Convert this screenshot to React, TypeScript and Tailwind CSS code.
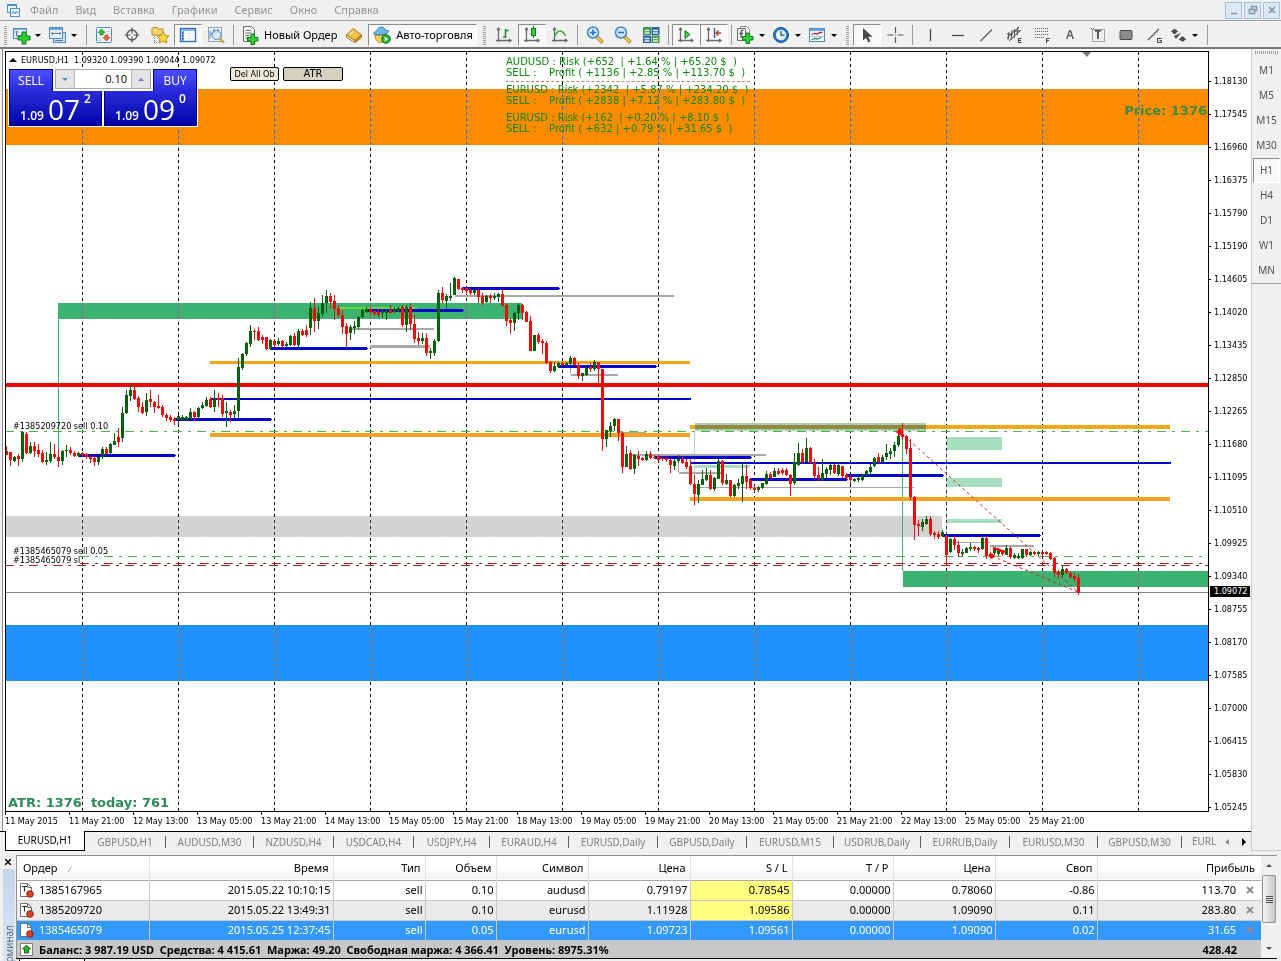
import React from 'react';

/* ------------------------------------------------------------------ */
/* Candles: direction, high, low, body top, body bottom (chart pixels) */
/* ------------------------------------------------------------------ */
const CANDLES = `
r446,455,451,455 r452,466,452,460 g456,462,457,461 r454,466,456,459 g431,462,432,459 r432,454,434,453
g442,454,446,453 r442,457,446,451 r444,457,450,454 r450,463,453,462 g452,465,460,462 g442,463,454,461
r444,459,454,457 r449,467,457,461 g450,465,451,461 g445,457,450,451 r447,455,450,453 r451,457,453,456
g452,457,453,456 r452,457,453,455 r453,459,454,457 r455,463,457,459 r455,466,458,462 g457,465,457,462
g447,459,449,457 r447,454,449,454 g443,454,444,453 g433,445,441,445 r428,447,437,442 g407,442,413,438
g390,414,395,413 g384,401,390,396 r387,400,390,399 r396,412,398,407 r402,414,407,413 g393,416,400,412
r390,407,399,402 r401,413,402,407 r395,409,406,408 r405,417,407,415 r413,421,415,418 r415,422,417,420
r417,425,419,421 g415,424,416,420 g415,421,417,420 g416,421,417,420 g408,420,412,419 r411,421,412,417
g407,418,408,417 g402,409,405,408 g397,407,400,406 r397,408,399,407 g390,412,399,407 r393,407,398,400
r395,417,398,414 g402,427,411,413 r410,422,412,415 g405,418,411,414 g358,418,367,411 g353,370,354,368
g342,356,343,354 g325,347,331,344 r329,340,331,332 r327,341,331,340 r335,344,337,340 r337,350,337,349
g339,350,340,349 r339,348,341,345 g338,346,341,344 r340,348,341,346 g342,347,344,346 g335,346,336,345
r333,346,336,345 g329,347,331,345 r329,336,331,335 r325,337,330,335 g302,335,308,328 r298,332,308,321
g307,329,313,321 g295,317,303,314 g290,313,296,303 r293,309,296,302 r295,320,301,309 r305,317,308,315
r310,334,315,327 r323,348,326,334 g325,340,327,333 g321,334,326,328 g316,329,317,327 g309,318,310,317
g307,313,309,312 r307,315,309,312 r310,316,311,314 r309,317,312,315 g309,318,312,313 g309,320,311,313
r305,314,310,313 g307,313,309,312 g307,312,308,311 r305,327,307,325 g305,332,307,325 r303,330,307,324
r315,343,324,339 r332,345,338,341 g333,344,338,341 r333,356,338,353 g348,359,351,353 g339,356,341,353
g290,342,293,341 r287,303,293,300 g294,309,296,301 g283,301,296,298 g277,295,278,295 r279,290,279,289
r287,293,288,290 r287,294,288,291 r289,295,290,293 g289,295,290,293 r289,303,290,297 r293,305,296,303
g295,303,296,302 r294,303,296,298 g293,300,296,298 g293,302,294,297 r289,306,294,306 r303,326,305,321
r318,334,320,323 g312,331,313,323 g303,320,305,313 r304,320,305,313 r311,322,312,322 r316,351,321,351
g335,351,335,351 r333,344,335,342 r339,354,341,343 r341,364,343,363 r361,373,362,371 g362,372,366,371
g362,368,363,367 r362,366,363,365 g362,366,363,365 g356,365,358,364 r357,366,358,365 r363,379,365,376
g373,381,373,376 g367,376,368,375 r363,372,367,369 g360,371,362,369 r362,383,362,369 r369,451,369,439
g430,447,430,439 g422,437,426,431 g418,431,419,426 r419,441,419,433 r432,473,433,467 g446,467,454,467
r450,470,453,469 g454,474,455,469 r451,466,456,459 r457,461,458,460 g451,461,454,460 r451,459,454,458
r455,459,457,458 r455,461,456,460 r457,461,458,459 r457,462,458,460 r459,473,460,465 g459,470,461,466
g455,463,459,461 r457,464,459,463 r459,469,462,467 r459,485,466,484 r475,505,484,494 g480,503,484,495
g470,485,479,485 g468,481,475,480 r470,490,475,489 g477,491,478,489 g459,479,461,479 r460,485,461,483
g474,485,480,484 r480,497,480,496 g484,497,485,496 g479,489,483,486 g462,502,476,484 r465,489,476,482
r478,490,480,488 r485,492,488,490 g486,492,487,490 g483,489,483,488 g471,485,474,484 r472,478,474,478
g468,477,471,477 r468,475,471,474 r468,475,470,473 r468,476,470,475 r474,496,475,484 g453,485,462,483
g443,466,453,465 r449,463,453,462 g438,462,448,462 r447,463,448,463 r459,479,463,476 r467,481,475,478
g459,481,473,480 g467,478,469,474 g463,475,465,470 r464,474,465,473 g462,476,465,474 r466,478,466,476
r473,480,475,478 r475,484,477,480 g478,482,479,481 g477,482,478,480 g474,481,475,480 g470,476,471,475
g464,474,467,472 g457,467,458,466 r453,463,457,462 g455,463,457,462 g444,460,453,457 g448,459,451,454
g442,457,445,451 g432,447,436,445 r423,440,434,437 r435,454,436,449 r439,500,448,497 r496,540,497,525
r520,536,524,526 g519,531,522,527 g516,525,519,524 r516,536,519,534 r531,539,533,535 r531,539,534,537
g530,537,532,536 r535,563,536,555 g538,553,539,552 r535,550,539,545 r541,557,545,553 g549,557,552,554
g547,553,548,553 g543,551,547,549 r546,551,547,549 r547,553,548,550 g537,550,538,549 r537,559,538,556
r552,558,554,557 g547,555,549,553 g548,556,551,554 r550,556,552,554 g545,555,548,555 r547,559,548,557
g553,559,555,558 g553,559,556,558 g549,559,549,558 r549,557,549,555 g551,556,552,555 r551,555,552,554
g551,556,552,554 r551,557,552,554 r551,555,552,554 r552,560,553,559 r557,577,558,573 r570,579,572,575
g565,577,569,575 r568,574,569,573 r571,579,573,577 r573,582,576,579 r574,595,578,593
`
  .trim()
  .split(/\s+/)
  .map((s, i) => {
    const [high, low, top, bottom] = s.slice(1).split(',').map(Number);
    return { x: 6 + i * 4, color: s[0] === 'r' ? '#ec0c0c' : '#07600c', high, low, top, bottom };
  });

type Box = [x: number, y: number, w: number, h: number, fill: string];

const ZONES: Box[] = [
  [6, 89, 1300, 56, '#ff8c00'],
  [6, 625, 1300, 56, '#1e90ff'],
  [6, 516, 936, 21, '#d3d3d3'],
  [59, 303, 463, 16, '#3cb371'],
  [58, 303, 1, 155, '#3cb371'],
  [903, 571, 400, 16, '#3cb371'],
  [902, 434, 1, 137, '#3cb371'],
  [947, 437, 55, 13, '#a5dfc0'],
  [947, 478, 55, 9, '#a5dfc0'],
  [947, 519, 55, 4, '#a5dfc0'],
  [946, 450, 1, 85, '#a5dfc0'],
  [695, 465, 55, 3, '#a5dfc0'],
  [694, 431, 1, 44, '#a5dfc0'],
];

const LEVELS: Box[] = [
  [455, 295, 219, 2, '#a8a8a8'],
  [350, 328, 84, 2, '#a8a8a8'],
  [370, 345, 60, 3, '#a8a8a8'],
  [570, 366, 1, 8, '#a8a8a8'],
  [571, 374, 47, 2, '#a8a8a8'],
  [618, 432, 28, 1, '#a8a8a8'],
  [632, 454, 134, 2, '#a8a8a8'],
  [678, 460, 1, 12, '#a8a8a8'],
  [679, 472, 43, 2, '#a8a8a8'],
  [694, 487, 220, 1, '#a8a8a8'],
  [944, 542, 46, 1, '#a8a8a8'],
  [990, 545, 44, 2, '#a8a8a8'],
  [990, 547, 1, 14, '#c4c4c4'],
  [210, 361, 480, 3, '#f2a51a'],
  [210, 433, 480, 4, '#f2a51a'],
  [690, 425, 480, 4, '#f2a51a'],
  [690, 497, 480, 4, '#f2a51a'],
  [695, 423, 231, 8, '#a9cfac'],
  [695, 425, 231, 4, '#94873f'],
  [210, 398, 481, 2, '#0505d0'],
  [690, 462, 481, 2, '#0505d0'],
  [338, 307, 79, 2, '#62d83c'],
  [6, 383, 1300, 4, '#f40404'],
];

const PIVOTS = [
  [78, 454], [174, 418], [270, 347], [366, 309], [462, 287],
  [559, 365], [654, 456], [750, 478], [846, 474], [943, 534],
];

const SEPARATORS = Array.from({ length: 12 }, (_, i) => 82 + i * 96);

function Plot() {
  return (
    <svg className="block h-[759px] w-full" aria-label="EURUSD,H1">
      <g transform="translate(-6 -52)" shapeRendering="crispEdges">
        <rect x="5" y="51" width="1600" height="761" fill="#fff" />
        {ZONES.map(([x, y, w, h, f], i) => (
          <rect key={i} x={x} y={y} width={w} height={h} fill={f} />
        ))}
        <g stroke="#fff" strokeDasharray="3 3" style={{ mixBlendMode: 'difference' }}>
          {SEPARATORS.map((x) => (
            <line key={x} x1={x + 0.5} x2={x + 0.5} y1="52" y2="811" />
          ))}
        </g>
        {LEVELS.map(([x, y, w, h, f], i) => (
          <rect key={i} x={x} y={y} width={w} height={h} fill={f} />
        ))}
        {PIVOTS.map(([x, y]) => (
          <g key={x} fill="#0505d0">
            <rect x={x} y={y} width="97" height="3" />
            <rect x={x - 1} y={y + 1} width="99" height="1" />
          </g>
        ))}
        <g fill="none" strokeDasharray="9 6 3 6">
          <path d="M5 431.5H1700M80 556.5H1700" stroke="#4caf4c" />
          <path d="M5 565.5H1700M80 563.5H1700" stroke="#b52222" />
        </g>
        <path d="M5 592.5H1700" stroke="#7a8590" />
        {CANDLES.map((c) => (
          <g key={c.x} fill={c.color}>
            <rect x={c.x} y={c.high} width="1" height={c.low - c.high} />
            <rect x={c.x - 1} y={c.top} width="3" height={Math.max(1, c.bottom - c.top)} />
          </g>
        ))}
        <g shapeRendering="auto" fill="none" stroke="#c42020">
          <path d="M900 432L1078 592M992 556L1078 592" strokeDasharray="3 3" />
          <path d="M993 548l12 4" stroke="#ec0c0c" strokeWidth="2.500" />
          <path d="M896 432l4-4 4 4-4 4zM988 556l4-3 3 3-3 3z" fill="#ec0c0c" stroke="none" />
        </g>
        <path d="M1082 52h9l-4 5z" fill="#708090" shapeRendering="auto" />
      </g>
    </svg>
  );
}

/* ------------------------------ Icons ------------------------------ */
const AXES = (
  <path d="M4.500 3v14M2 15.500h15M3 5l1.500-2L6 5M15 14l2 1.500-2 1.500" fill="none" stroke="#6a6a6a" strokeWidth="1.300" />
);

const ICONS: Record<string, React.ReactNode> = {
  newChart: (
    <>
      <rect x="2.500" y="3.500" width="13" height="10" fill="#e6f1fb" stroke="#4a8cc8" />
      <path d="M3 4.500h12" stroke="#7fb2e0" />
      <path d="M5.500 6v5M4 7.500l1.500-1.500 1.500 1.500M6 11h5" fill="none" stroke="#58708a" />
      <path d="M11 7h4v4h4v4h-4v4h-4v-4H7v-4h4z" fill="#2fd32f" stroke="#0c7a14" />
    </>
  ),
  profiles: (
    <>
      <rect x="6.500" y="7.500" width="12" height="10" fill="#cfe3f7" stroke="#4a8cc8" />
      <rect x="2.500" y="2.500" width="13" height="11" fill="#e6f1fb" stroke="#4a8cc8" />
      <path d="M3 4h12" stroke="#5b9fdc" strokeWidth="2" />
      <path d="M5 8.500h8M5 7v3M13 7v3" stroke="#58708a" />
      <path d="M8 15.500h8" stroke="#58708a" />
    </>
  ),
  market: (
    <>
      <rect x="2.500" y="2.500" width="15" height="15" rx="1" fill="#f4f9fe" stroke="#4a8cc8" />
      <path d="M12 6.500h4M13 8.500h3M4 13.500h3M4 15.500h4" stroke="#b9cfe4" />
      <path d="M7.500 4l3.500 3.500H9v2.500H6V7.500H4z" fill="#2fc32f" stroke="#0c7a14" strokeWidth=".7" />
      <path d="M12.500 16L9 12.500h2V10h3v2.500h2z" fill="#f06a3a" stroke="#b03210" strokeWidth=".7" />
    </>
  ),
  target: (
    <>
      <circle cx="10" cy="10" r="5" fill="none" stroke="#5a5a5a" strokeWidth="1.400" />
      <path d="M10 2.500v6M10 11.500v6M2.500 10h6M11.500 10h6" stroke="#5a5a5a" strokeWidth="1.200" />
    </>
  ),
  folder: (
    <>
      <path d="M2 3.500l1-1h4l1 1.500h5v6H2z" fill="#f7d774" stroke="#c08a1c" />
      <path d="M4.500 11v7M4 17.500h4" stroke="#4a6a8a" strokeDasharray="1 1" />
      <path d="M13 6.500l1.900 3.900 4.100.6-3 2.900.7 4.100-3.700-2-3.700 2 .7-4.100-3-2.900 4.100-.6z" fill="#ffd84a" stroke="#bf8a10" />
    </>
  ),
  navigator: (
    <>
      <rect x="2.500" y="3.500" width="15" height="13" fill="#fff" stroke="#2e6fc4" strokeWidth="1.400" />
      <path d="M3 5h14" stroke="#6aa5e6" strokeWidth="1.500" />
      <rect x="3.500" y="6" width="2.500" height="10" fill="#7fb0e6" />
      <path d="M4.800 7v1.500M4.800 10v1.500M4.800 13v1.500" stroke="#0d2f6b" />
      <path d="M8 8.500h7.500M8 11h7.500M8 13.500h7.500" stroke="#dde6f2" />
    </>
  ),
  tester: (
    <>
      <rect x="2.500" y="2.500" width="13" height="14" fill="#eef4fa" stroke="#8aa9c8" />
      <path d="M4 14V6l2 4 2-6 2 5 2-5 1 4" fill="none" stroke="#6f8faf" />
      <circle cx="10.500" cy="10" r="4.500" fill="#cfe6fa" fillOpacity=".8" stroke="#5b86b0" />
      <path d="M13.800 13.300l4.200 4.700" stroke="#d9a52a" strokeWidth="2.500" />
    </>
  ),
  order: (
    <>
      <path d="M3.500 1.500h8l3 3v12h-11z" fill="#f7f7f7" stroke="#6a6a6a" />
      <path d="M5.500 5.500h5M5.500 8h6M5.500 10.500h4M5.500 13h3" stroke="#6a6a6a" />
      <path d="M11 9h3.500v3.500H18V16h-3.500v3.500H11V16H7.500v-3.500H11z" fill="#2fd32f" stroke="#0c7a14" />
    </>
  ),
  book: (
    <>
      <path d="M2.500 10L9 3.500l8.500 6.500-6.500 5.500z" fill="#f3c14a" stroke="#a8761a" />
      <path d="M2.500 10v2.500l8.500 5v-2z" fill="#fff3cf" stroke="#a8761a" />
      <path d="M11 15.500l6.500-5.500v2.500L11 17.500z" fill="#cf9626" stroke="#a8761a" />
      <path d="M6 9.500l3.500-3.500" stroke="#fbe7a8" strokeWidth="1.500" />
    </>
  ),
  auto: (
    <>
      <path d="M3 10c0 4.500 2.500 7.500 6 7.500s6-3 6-7.500z" fill="#f6cf56" stroke="#b98a1c" />
      <path d="M1.500 8.500C2 7 4.500 6.500 5 5.200 5.800 2.500 8 2 10 2.200s3 1.300 3.200 3c1.300.3 3.300 0 3.800 1-1.500 3.300-13 5.300-15.500 2.300z" fill="#6fb6e4" stroke="#2f7fb6" />
      <circle cx="14" cy="14" r="4.300" fill="#25b534" stroke="#0d7a1b" />
      <path d="M12.700 11.500l3.600 2.500-3.600 2.500z" fill="#fff" />
    </>
  ),
  bars: (
    <>
      {AXES}
      <path d="M11.500 4v9M11.500 5.500h3M9 12h2.500" stroke="#1c8a2c" strokeWidth="1.500" />
    </>
  ),
  candle: (
    <>
      {AXES}
      <path d="M11.500 1v12" stroke="#0c6a14" />
      <rect x="9.500" y="3.500" width="4" height="7" fill="#2fd34a" stroke="#0c7a14" />
    </>
  ),
  line: (
    <>
      {AXES}
      <path d="M4.500 12C6 8 8 6 10 6s4 2 6 5" fill="none" stroke="#3aa04a" strokeWidth="1.300" />
    </>
  ),
  zoomIn: (
    <>
      <path d="M11.500 11.500l6 6" stroke="#a8791a" strokeWidth="3.600" />
      <path d="M11.500 11.500l5.500 5.500" stroke="#f2cc50" strokeWidth="2" />
      <circle cx="8" cy="7.500" r="5.500" fill="#cfe8fc" stroke="#3f86c6" strokeWidth="1.500" />
      <path d="M8 4.500v6M5 7.500h6" stroke="#2a70b8" strokeWidth="1.600" />
    </>
  ),
  zoomOut: (
    <>
      <path d="M11.500 11.500l6 6" stroke="#a8791a" strokeWidth="3.600" />
      <path d="M11.500 11.500l5.500 5.500" stroke="#f2cc50" strokeWidth="2" />
      <circle cx="8" cy="7.500" r="5.500" fill="#cfe8fc" stroke="#3f86c6" strokeWidth="1.500" />
      <path d="M5 7.500h6" stroke="#2a70b8" strokeWidth="1.600" />
    </>
  ),
  tile: (
    <>
      <rect x="2" y="2" width="8" height="8" fill="#3c9a3c" />
      <rect x="10.500" y="2" width="8" height="8" fill="#2d62b4" />
      <rect x="2" y="10.500" width="8" height="7.500" fill="#2d62b4" />
      <rect x="10.500" y="10.500" width="8" height="7.500" fill="#3c9a3c" />
      <path d="M3.500 5.500h5M3.500 8h5M12 5.500h5M12 8h5M3.500 13.500h5M3.500 16h5M12 13.500h5M12 16h5" stroke="#e6f2ff" strokeWidth="1.600" />
    </>
  ),
  scroll: (
    <>
      {AXES}
      <path d="M9 5.500l5 4-5 4z" fill="#3fce4e" stroke="#0c7a14" />
    </>
  ),
  shift: (
    <>
      {AXES}
      <path d="M10.500 3v10" stroke="#3a5f86" strokeWidth="1.400" />
      <path d="M17 8h-5M14.500 5.500L12 8l2.500 2.500" fill="none" stroke="#b5401c" strokeWidth="1.400" />
    </>
  ),
  indicator: (
    <>
      <path d="M5.500 1.500h6l3 3v10h-9z" fill="#fff" stroke="#8a8a8a" />
      <path d="M2.500 3.500h8v12h-8z" fill="#f7f7f7" stroke="#6a6a6a" />
      <path d="M8.500 5.500c-2-1-2.500.5-2.500 2v5.500M4.500 8.500h3.500" fill="none" stroke="#4a4a4a" strokeWidth="1.300" />
      <path d="M11 8h3.500v3.500H18V15h-3.500v3.500H11V15H7.500v-3.500H11z" fill="#2fd32f" stroke="#0c7a14" />
    </>
  ),
  clock: (
    <>
      <circle cx="10" cy="10" r="7.500" fill="#2b78cc" stroke="#174f96" />
      <circle cx="10" cy="10" r="5.200" fill="#eaf5ff" />
      <path d="M10 6v4.200h3.500" fill="none" stroke="#1d4f8c" strokeWidth="1.300" />
    </>
  ),
  template: (
    <>
      <rect x="2.500" y="3.500" width="15" height="13" fill="#f7fbff" stroke="#4a8cc8" />
      <path d="M3 5h14" stroke="#6aa5e6" strokeWidth="2" />
      <path d="M4.500 9.500l3-1 3 .5 2-1.500h3" fill="none" stroke="#a83232" strokeWidth="1.300" />
      <path d="M3 11.500h14" stroke="#9fc0e0" />
      <path d="M4.500 14.500l3-1 3 .5 4-1.500" fill="none" stroke="#2f8f4a" strokeWidth="1.300" />
    </>
  ),
  cursor: <path d="M6 3v12.500l3-2.800 2.200 4.800 2.200-1-2.200-4.700h4.300z" fill="#4a4a4a" />,
  cross: <path d="M10.500 2v6M10.500 12v6M2.500 10h6M12.500 10h6M10 10h1" stroke="#5a5a5a" strokeWidth="1.200" />,
  vline: <path d="M10.500 4v12" stroke="#4a4a4a" strokeWidth="1.300" />,
  hline: <path d="M4 10.500h12" stroke="#4a4a4a" strokeWidth="1.300" />,
  trend: <path d="M4.500 16L16 4.500" stroke="#5a5a5a" strokeWidth="1.300" />,
  channel: (
    <>
      <path d="M3 13L15 2M5 16l12-11M5 7l-1 8M8 5l-1 10M11 4l-1 9M14 2l-1 8M3 9h6M9 6h7" stroke="#4a4a4a" />
      <path d="M17.500 13.500h-3v4h3M14.500 15.500h2.500" fill="none" stroke="#3a3a3a" />
    </>
  ),
  fibo: (
    <>
      <path d="M3 3.500h14M3 6.500h14M3 9.500h14M3 12.500h9" stroke="#5a5a5a" strokeDasharray="1 1" />
      <path d="M17.500 13.500h-3v4.500M14.500 15.500h2.500" fill="none" stroke="#3a3a3a" />
    </>
  ),
  frame: <path d="M4.500 4.500h12v12h-12zM3 3.500h3" fill="none" stroke="#5a5a5a" strokeDasharray="1 1" />,
  box: <rect x="4" y="5.500" width="12" height="9" rx="1" fill="#8c8c8c" stroke="#4a4a4a" />,
  gann: (
    <>
      <path d="M4 15L15 4" stroke="#5a5a5a" strokeWidth="1.200" />
      <path d="M17.500 13.500h-4v4h4v-2h-2" fill="none" stroke="#3a3a3a" />
    </>
  ),
  shapes: (
    <path d="M3 6.500L6.500 4 10 6.500l-2 .5v1.500H5V7zM11 14l3.500 2.500 3.500-2.500-2-.5v-1.500h-3v1.500zM6 11l2 2.500L12.500 8" fill="#4a4a4a" stroke="#4a4a4a" strokeWidth=".6" />
  ),
};

function Icon({ name }: { name: string }) {
  return (
    <svg className="size-5 shrink-0" viewBox="0 0 20 20" aria-hidden="true">
      {ICONS[name]}
    </svg>
  );
}

function Caret() {
  return <span className="border-x-3 border-t-3 border-x-transparent border-t-black" />;
}

function Tool({ icon, pressed, caret, children }: { icon?: string; pressed?: boolean; caret?: boolean; children?: React.ReactNode }) {
  const look = pressed
    ? 'border border-t-[#8c8c8c] border-l-[#8c8c8c] border-r-white border-b-white bg-[#f8f8f8]'
    : '';
  const width = children ? 'px-[3px]' : caret ? 'w-9' : 'w-7 justify-center';
  return (
    <button type="button" aria-label={icon} className={`flex h-[22px] shrink-0 items-center gap-1 whitespace-nowrap ${width} ${look}`}>
      {icon && <Icon name={icon} />}
      {children}
      {caret && <Caret />}
    </button>
  );
}

function Sep() {
  return <span className="mx-[3px] h-5 w-px shrink-0 bg-[#9c9c9c]" />;
}

function Grip() {
  return (
    <span className="mx-1 h-[19px] w-[3px] shrink-0 bg-[repeating-linear-gradient(#a0a0a0_0_1px,#f0f0f0_1px_2px)]" />
  );
}

/* --------------------------- Menu, toolbar -------------------------- */
function MenuBar() {
  return (
    <header className="flex h-5 items-center pl-[6px] text-[#949494]">
      <svg className="size-[15px]" viewBox="0 0 15 15" aria-hidden="true">
        <rect x="1.500" y="1.500" width="9" height="8" fill="#e8f3fd" stroke="#4a90cc" />
        <path d="M1 2h10" stroke="#4a90cc" strokeWidth="2" />
        <rect x="4.500" y="5.500" width="9" height="8" fill="#f4faff" stroke="#4a90cc" />
        <path d="M6 11l1.500-3L9 11l1.500-3 1.500 3" fill="none" stroke="#4a90cc" />
      </svg>
      <nav className="ml-[9px] flex flex-1 gap-[17px] font-[Noto_Sans,sans-serif] text-[11px]">
        {['Файл', 'Вид', 'Вставка', 'Графики', 'Сервис', 'Окно', 'Справка'].map((m) => (
          <a key={m} href="#">{m}</a>
        ))}
      </nav>
      <div className="flex gap-[2px] pr-px">
        {['M4 10.500h6', 'M3.500 6.500h5v4h-5zM5.500 6V3.500h5v4H9', 'M4 4l6 6M10 4l-6 6'].map((d) => (
          <button key={d} type="button" aria-label="Окно" className="flex size-[17px] items-center justify-center border border-[#a3c0dc] bg-[#dbe9f6]">
            <svg className="size-[14px]" viewBox="0 0 14 14"><path d={d} fill="none" stroke="#8296aa" strokeWidth="1.600" /></svg>
          </button>
        ))}
      </div>
    </header>
  );
}

function Toolbar() {
  return (
    <div className="flex h-[29px] items-center overflow-hidden border-t border-b-2 border-t-[#a0a0a0] border-b-[#787878] pt-[2px] font-[Noto_Sans,sans-serif] text-[11px] text-black">
      <div className="flex w-[479px] shrink-0 items-center">
        <Grip />
        <Tool icon="newChart" caret />
        <Tool icon="profiles" caret />
        <Sep />
        <Tool icon="market" />
        <Tool icon="target" />
        <Tool icon="folder" />
        <Tool icon="navigator" pressed />
        <Tool icon="tester" />
        <Sep />
        <Tool icon="order">Новый Ордер</Tool>
        <Tool icon="book" />
        <Tool icon="auto" pressed>Авто-торговля</Tool>
      </div>
      <div className="flex w-[363px] shrink-0 items-center">
        <Grip />
        <Tool icon="bars" />
        <Tool icon="candle" pressed />
        <Tool icon="line" />
        <Sep />
        <Tool icon="zoomIn" />
        <Tool icon="zoomOut" />
        <Tool icon="tile" />
        <Sep />
        <Tool icon="scroll" pressed />
        <Tool icon="shift" pressed />
        <Sep />
        <Tool icon="indicator" caret />
        <Tool icon="clock" caret />
        <Tool icon="template" caret />
      </div>
      <div className="flex shrink-0 items-center">
        <Grip />
        <Tool icon="cursor" pressed />
        <Tool icon="cross" />
        <Sep />
        <Tool icon="vline" />
        <Tool icon="hline" />
        <Tool icon="trend" />
        <Tool icon="channel" />
        <Tool icon="fibo" />
        <button type="button" className="w-7 shrink-0 text-[12px] font-semibold text-[#5a5a5a]">A</button>
        <button type="button" className="relative flex h-[22px] w-7 shrink-0 items-center justify-center text-[12px] font-bold text-[#4a4a4a]">
          <span className="absolute"><Icon name="frame" /></span>
          T
        </button>
        <Tool icon="box" />
        <Tool icon="gann" />
        <Tool icon="shapes" caret />
        <Sep />
      </div>
    </div>
  );
}

/* ------------------------------ Chart ------------------------------- */
function Quote({ base, big, sup, side }: { base: string; big: string; sup: string; side: string }) {
  return (
    <button type="button" aria-label={side} className="flex h-[35px] flex-1 items-end justify-center border border-t-0 border-[#00007a] bg-linear-to-b from-[#2a2ad8] to-[#0000a8] pb-[3px] text-white">
      <span className="text-[12px] leading-3 font-semibold">{base}</span>
      <span className="ml-1 text-[28px] leading-[26px]">{big}</span>
      <span className="ml-1 self-start text-[12px] leading-4 font-semibold">{sup}</span>
    </button>
  );
}

function OneClick() {
  return (
    <div className="absolute top-4 left-[2px] w-[190px] bg-white p-px font-[Open_Sans,sans-serif]">
      <div className="flex h-[22px] items-stretch">
        <button type="button" className="w-11 border border-b-0 border-[#00007a] bg-linear-to-b from-[#4e4eff] to-[#2a2ad8] text-[12px] leading-5 text-white">SELL</button>
        <div className="mx-[2px] mb-[2px] flex flex-1 border border-[#a8a8a8] bg-white">
          <button type="button" aria-label="-" className="flex w-[18px] items-center justify-center bg-[#e4e4e4]">
            <span className="border-x-3 border-t-3 border-x-transparent border-t-[#6a7fae]" />
          </button>
          <input aria-label="Объем" defaultValue="0.10" className="w-0 flex-1 border-x border-[#b8b8b8] pr-1 text-right text-[11px] text-black outline-none" />
          <button type="button" aria-label="+" className="flex w-[18px] items-center justify-center bg-[#e4e4e4]">
            <span className="border-x-3 border-b-3 border-x-transparent border-b-[#6a7fae]" />
          </button>
        </div>
        <button type="button" className="w-11 border border-b-0 border-[#00007a] bg-linear-to-b from-[#4e4eff] to-[#2a2ad8] text-[12px] leading-5 text-white">BUY</button>
      </div>
      <div className="flex gap-[2px]">
        <Quote side="SELL" base="1.09" big="07" sup="2" />
        <Quote side="BUY" base="1.09" big="09" sup="0" />
      </div>
    </div>
  );
}

const POSITIONS = [
  ['AUDUSD : Risk (+652  | +1.64 % | +65.20 $  )', 'SELL :    Profit ( +1136 | +2.85 % | +113.70 $  )'],
  ['EURUSD : Risk (+2342  | +5.87 % | +234.20 $  )', 'SELL :    Profit ( +2838 | +7.12 % | +283.80 $  )'],
  ['EURUSD : Risk (+162  | +0.20 % | +8.10 $  )', 'SELL :    Profit ( +632 | +0.79 % | +31.65 $  )'],
];

const PRICES = [
  '1.18130', '1.17545', '1.16960', '1.16375', '1.15790', '1.15190', '1.14605', '1.14020',
  '1.13435', '1.12850', '1.12265', '1.11680', '1.11095', '1.10510', '1.09925', '1.09340',
  '1.08755', '1.08170', '1.07585', '1.07000', '1.06415', '1.05830', '1.05245',
];

const TIMES = [
  '11 May 2015', '11 May 21:00', '12 May 13:00', '13 May 05:00', '13 May 21:00', '14 May 13:00',
  '15 May 05:00', '15 May 21:00', '18 May 13:00', '19 May 05:00', '19 May 21:00', '20 May 13:00',
  '21 May 05:00', '21 May 21:00', '22 May 13:00', '25 May 05:00', '25 May 21:00',
];

const label = 'absolute whitespace-pre text-[9px] leading-3';

function Chart() {
  return (
    <div className="ml-[2px] flex min-w-0 flex-1 flex-col border-l border-[#8c8c8c] bg-white pt-[2px] pl-[2px] font-[DejaVu_Sans_Condensed,DejaVu_Sans,sans-serif] text-black">
      <div className="flex">
        <div className="relative min-w-0 flex-1 border border-black">
          <Plot />
          <div className={`${label} top-[2px] left-[3px] flex items-center gap-1`}>
            <span className="border-x-4 border-b-4 border-x-transparent border-b-black" />
            <span>EURUSD,H1  1.09320 1.09390 1.09044 1.09072</span>
          </div>
          <OneClick />
          <div className="absolute top-[15px] left-[224px] flex gap-1">
            <button type="button" className="h-[14px] w-[49px] rounded-xs border border-black bg-[#ece9d8] text-[9px] leading-3 whitespace-nowrap">Del All Ob</button>
            <button type="button" className="h-[14px] w-[60px] rounded-xs border border-black bg-[#d6d2c2] text-[11px] leading-3">ATR</button>
          </div>
          <div className="absolute top-1 left-[500px] flex flex-col gap-[6px] font-[DejaVu_Sans,sans-serif] text-[10px] leading-[11px] whitespace-pre text-[#0c8a0c]">
            {POSITIONS.map(([risk, profit], i) => (
              <div key={risk} className="relative">
                <p>{risk}</p>
                <p>{profit}</p>
                {i === 0 && <span className="absolute top-[25px] left-0 w-[244px] border-t border-dashed border-[#d08060]" />}
              </div>
            ))}
          </div>
          <p className="absolute top-[51px] right-px font-[DejaVu_Sans,sans-serif] text-[13px] leading-4 font-bold text-[#3c8a44]">Price: 1376</p>
          <p className="absolute bottom-0 left-[2px] font-[DejaVu_Sans,sans-serif] text-[13px] leading-4 font-bold whitespace-pre text-[#2e8b57]">ATR: 1376  today: 761</p>
          <p className={`${label} top-[368px] left-[7px]`}>#1385209720 sell 0.10</p>
          <p className={`${label} top-[493px] left-[7px]`}>#1385465079 sell 0.05</p>
          <p className={`${label} top-[502px] left-[7px]`}>#1385465079 sl</p>
        </div>
        <ol className="relative -mb-3 w-[42px] shrink-0 pt-[14px] text-[9px]">
          {PRICES.map((p) => (
            <li key={p} className="flex h-[33px] items-center gap-[3px]"><span className="h-px w-[2px] bg-black" />{p}</li>
          ))}
          <li className="absolute top-[535px] left-px bg-black pr-[3px] pl-1 leading-[11px] text-white">1.09072</li>
        </ol>
      </div>
      <ol className="-mt-px flex h-5 overflow-hidden text-[9px] leading-3 whitespace-nowrap">
        {TIMES.map((t) => (
          <li key={t} className="w-16 shrink-0">
            <span className="block h-1 w-px bg-black" />
            {t}
          </li>
        ))}
      </ol>
    </div>
  );
}

const TABS = [
  ['GBPUSD,H1', 'w-[81px]'], ['AUDUSD,M30', 'w-[88px]'], ['NZDUSD,H4', 'w-[80px]'], ['USDCAD,H4', 'w-[80px]'],
  ['USDJPY,H4', 'w-[76px]'], ['EURAUD,H4', 'w-[79px]'], ['EURUSD,Daily', 'w-[89px]'], ['GBPUSD,Daily', 'w-[89px]'],
  ['EURUSD,M15', 'w-[87px]'], ['USDRUB,Daily', 'w-[87px]'], ['EURRUB,Daily', 'w-[89px]'], ['EURUSD,M30', 'w-[88px]'],
  ['GBPUSD,M30', 'w-[84px]'],
];

function ChartTabs() {
  return (
    <nav className="flex h-5 border-t border-black font-[Noto_Sans,sans-serif] text-[10px] leading-4 text-[#808080]">
      <a href="#" className="-mt-px ml-[5px] h-5 w-20 shrink-0 border border-t-0 border-black bg-white pt-px text-center text-black">EURUSD,H1</a>
      {TABS.map(([t, w]) => (
        <a key={t} href="#" className={`${w} flex shrink-0 items-center justify-center`}>
          <span className="flex-1 text-center">{t}</span>
          <span className="h-3 w-px bg-[#606060]" />
        </a>
      ))}
      <a href="#" className="ml-[10px] w-[25px] pt-px">EURL</a>
      <span className="ml-2 flex items-center gap-[13px]">
        <button type="button" aria-label="←" className="border-y-3 border-r-4 border-y-transparent border-r-[#8c8c8c]" />
        <button type="button" aria-label="→" className="border-y-4 border-l-4 border-y-transparent border-l-black" />
      </span>
    </nav>
  );
}

function Periods() {
  return (
    <aside className="w-[30px] shrink-0 border-l border-b border-[#c8c8c8] font-[Noto_Sans,sans-serif] text-[10px] text-[#505050]">
      <span className="mx-auto mt-[2px] mb-1 block h-[3px] w-6 bg-[repeating-linear-gradient(90deg,#a0a0a0_0_1px,#f0f0f0_1px_2px)]" />
      <div className="flex flex-col border-b border-[#a0a0a0]">
        {['M1', 'M5', 'M15', 'M30', 'H1', 'H4', 'D1', 'W1', 'MN'].map((p) => (
          <button
            key={p}
            type="button"
            className={
              p === 'H1'
                ? 'mx-px h-[25px] border border-t-[#8c8c8c] border-r-white border-b-white border-l-[#8c8c8c] bg-[#f8f8f8]'
                : 'h-[25px]'
            }
          >
            {p}
          </button>
        ))}
      </div>
    </aside>
  );
}

/* ----------------------------- Terminal ----------------------------- */
const COLS = ['w-[132px]', 'w-[184px]', 'w-[92px]', 'w-[71px]', 'w-[92px]', 'w-[102px]', 'w-[102px]', 'w-[101px]', 'w-[102px]', 'w-[102px]', ''];
const HEAD = ['Время', 'Тип', 'Объем', 'Символ', 'Цена', 'S / L', 'T / P', 'Цена', 'Своп', 'Прибыль'];
const ORDERS = [
  ['1385167965', '2015.05.22 10:10:15', 'sell', '0.10', 'audusd', '0.79197', '0.78545', '0.00000', '0.78060', '-0.86', '113.70'],
  ['1385209720', '2015.05.22 13:49:31', 'sell', '0.10', 'eurusd', '1.11928', '1.09586', '0.00000', '1.09090', '0.11', '283.80'],
  ['1385465079', '2015.05.25 12:37:45', 'sell', '0.05', 'eurusd', '1.09723', '1.09561', '0.00000', '1.09090', '0.02', '31.65'],
];
const ROW = ['bg-white', 'bg-[#ebebeb]', 'bg-[#3399ff] text-white'];

function DocIcon({ text }: { text?: boolean }) {
  return (
    <svg className="size-4 shrink-0" viewBox="0 0 16 16" aria-hidden="true">
      <path d="M1.500 1.500h7l4 4v9h-11z" fill="#fff" stroke="#707070" />
      <path d="M8.500 1.500v4h4" fill="none" stroke="#707070" />
      {text && <path d="M3 4.500h5M5.500 4.500v5" stroke="#303030" strokeWidth="1.200" />}
      <circle cx="11" cy="12" r="3.300" fill="#e0401c" stroke="#8c2410" />
    </svg>
  );
}

function Terminal() {
  return (
    <section className="mt-1 flex min-h-0 flex-1 font-[Noto_Sans,sans-serif] text-[11px] text-black">
      <div className="flex w-4 shrink-0 flex-col items-center">
        <button type="button" aria-label="×" className="flex h-[14px] w-4 items-center justify-center">
          <svg className="size-[6px]" viewBox="0 0 6 6"><path d="M0 0l6 6M6 0L0 6" stroke="#000" strokeWidth="1.500" /></svg>
        </button>
        <div className="ml-[2px] flex w-3 flex-1 items-end justify-center bg-linear-to-b from-[#c4d6ea] to-[#dbe5f0]">
          <span className="-mb-3 rotate-180 text-[10px] leading-3 text-[#5c6c80] [writing-mode:vertical-rl]">Терминал</span>
        </div>
      </div>
      <div className="flex min-w-0 flex-1 flex-col">
        <div className="flex border-t border-l border-[#909090]">
          <table className="min-w-0 flex-1 table-fixed border-collapse">
            <colgroup>{COLS.map((c, i) => <col key={i} className={c} />)}</colgroup>
            <thead>
              <tr className="h-6 border-b border-[#a8a8a8] bg-linear-to-b from-white from-50% to-[#f0f2f4]">
                <th className="border-r border-[#e0e3e6] pl-[6px] text-left font-normal">
                  Ордер<span className="ml-3 text-[8px] text-[#707070]">∕</span>
                </th>
                {HEAD.map((h, i) => (
                  <th key={i} className="border-r border-[#e0e3e6] pr-1 text-right font-normal last:border-0 last:pr-[6px]">{h}</th>
                ))}
              </tr>
            </thead>
            <tbody>
              {ORDERS.map((row, r) => (
                <tr key={row[0]} className={`h-5 border-b border-[#c8c8c8] leading-[18px] ${ROW[r]}`}>
                  <td className="border-r border-[#c8c8c8] pl-[2px]">
                    <span className="flex items-center gap-1"><DocIcon text={r < 2} />{row[0]}</span>
                  </td>
                  {row.slice(1, 10).map((v, i) => (
                    <td key={i} className={`border-r border-[#c8c8c8] pr-[2px] text-right ${i === 5 && r < 2 ? 'bg-[#ffff80]' : ''}`}>{v}</td>
                  ))}
                  <td className="pr-[7px]">
                    <span className="flex items-center justify-end gap-[10px]">
                      {row[10]}
                      <button type="button" aria-label="×">
                        <svg className="size-2" viewBox="0 0 8 8"><path d="M1 1l6 6M7 1L1 7" stroke="#8c8c8c" strokeWidth="1.800" /></svg>
                      </button>
                    </span>
                  </td>
                </tr>
              ))}
            </tbody>
            <tfoot>
              <tr className="h-[18px] bg-[#c8c8c8] leading-[17px] font-bold">
                <td colSpan={10} className="pl-[3px]">
                  <span className="flex items-center gap-[6px] whitespace-pre">
                    <svg className="size-[13px]" viewBox="0 0 13 13" aria-hidden="true">
                      <rect x=".5" y=".5" width="12" height="12" fill="#fff" stroke="#808080" />
                      <path d="M6.500 2l4 4h-2v4h-4V6h-2z" fill="#2fb52f" stroke="#0c6a14" />
                    </svg>
                    Баланс: 3 987.19 USD  Средства: 4 415.61  Маржа: 49.20  Свободная маржа: 4 366.41  Уровень: 8975.31%
                  </span>
                </td>
                <td className="pr-6 text-right">428.42</td>
              </tr>
            </tfoot>
          </table>
          <div className="flex w-4 shrink-0 flex-col items-center bg-[#f0f0f0] pt-2 pb-2">
            <span className="border-x-3 border-b-3 border-x-transparent border-b-[#505050]" />
            <div className="mt-2 flex h-12 w-[14px] flex-col items-center justify-center gap-px rounded-xs border border-[#909090] bg-linear-to-r from-[#f4f4f4] to-[#c8c8c8]">
              <span className="h-px w-[7px] bg-[#505050]" />
              <span className="h-px w-[7px] bg-[#505050]" />
              <span className="h-px w-[7px] bg-[#505050]" />
              <span className="h-px w-[7px] bg-[#505050]" />
            </div>
            <span className="mt-auto border-x-3 border-t-3 border-x-transparent border-t-[#505050]" />
          </div>
        </div>
        <div className="flex-1 border-t border-black">
          <div className="ml-[3px] h-full w-[66px] border-x border-black bg-white" />
        </div>
      </div>
      <div className="w-1 shrink-0" />
    </section>
  );
}

export default function App() {
  return (
    <div className="flex h-screen flex-col overflow-hidden bg-[#f0f0f0]">
      <MenuBar />
      <Toolbar />
      <main className="flex">
        <div className="flex min-w-0 flex-1 flex-col">
          <Chart />
          <ChartTabs />
        </div>
        <Periods />
      </main>
      <Terminal />
    </div>
  );
}
